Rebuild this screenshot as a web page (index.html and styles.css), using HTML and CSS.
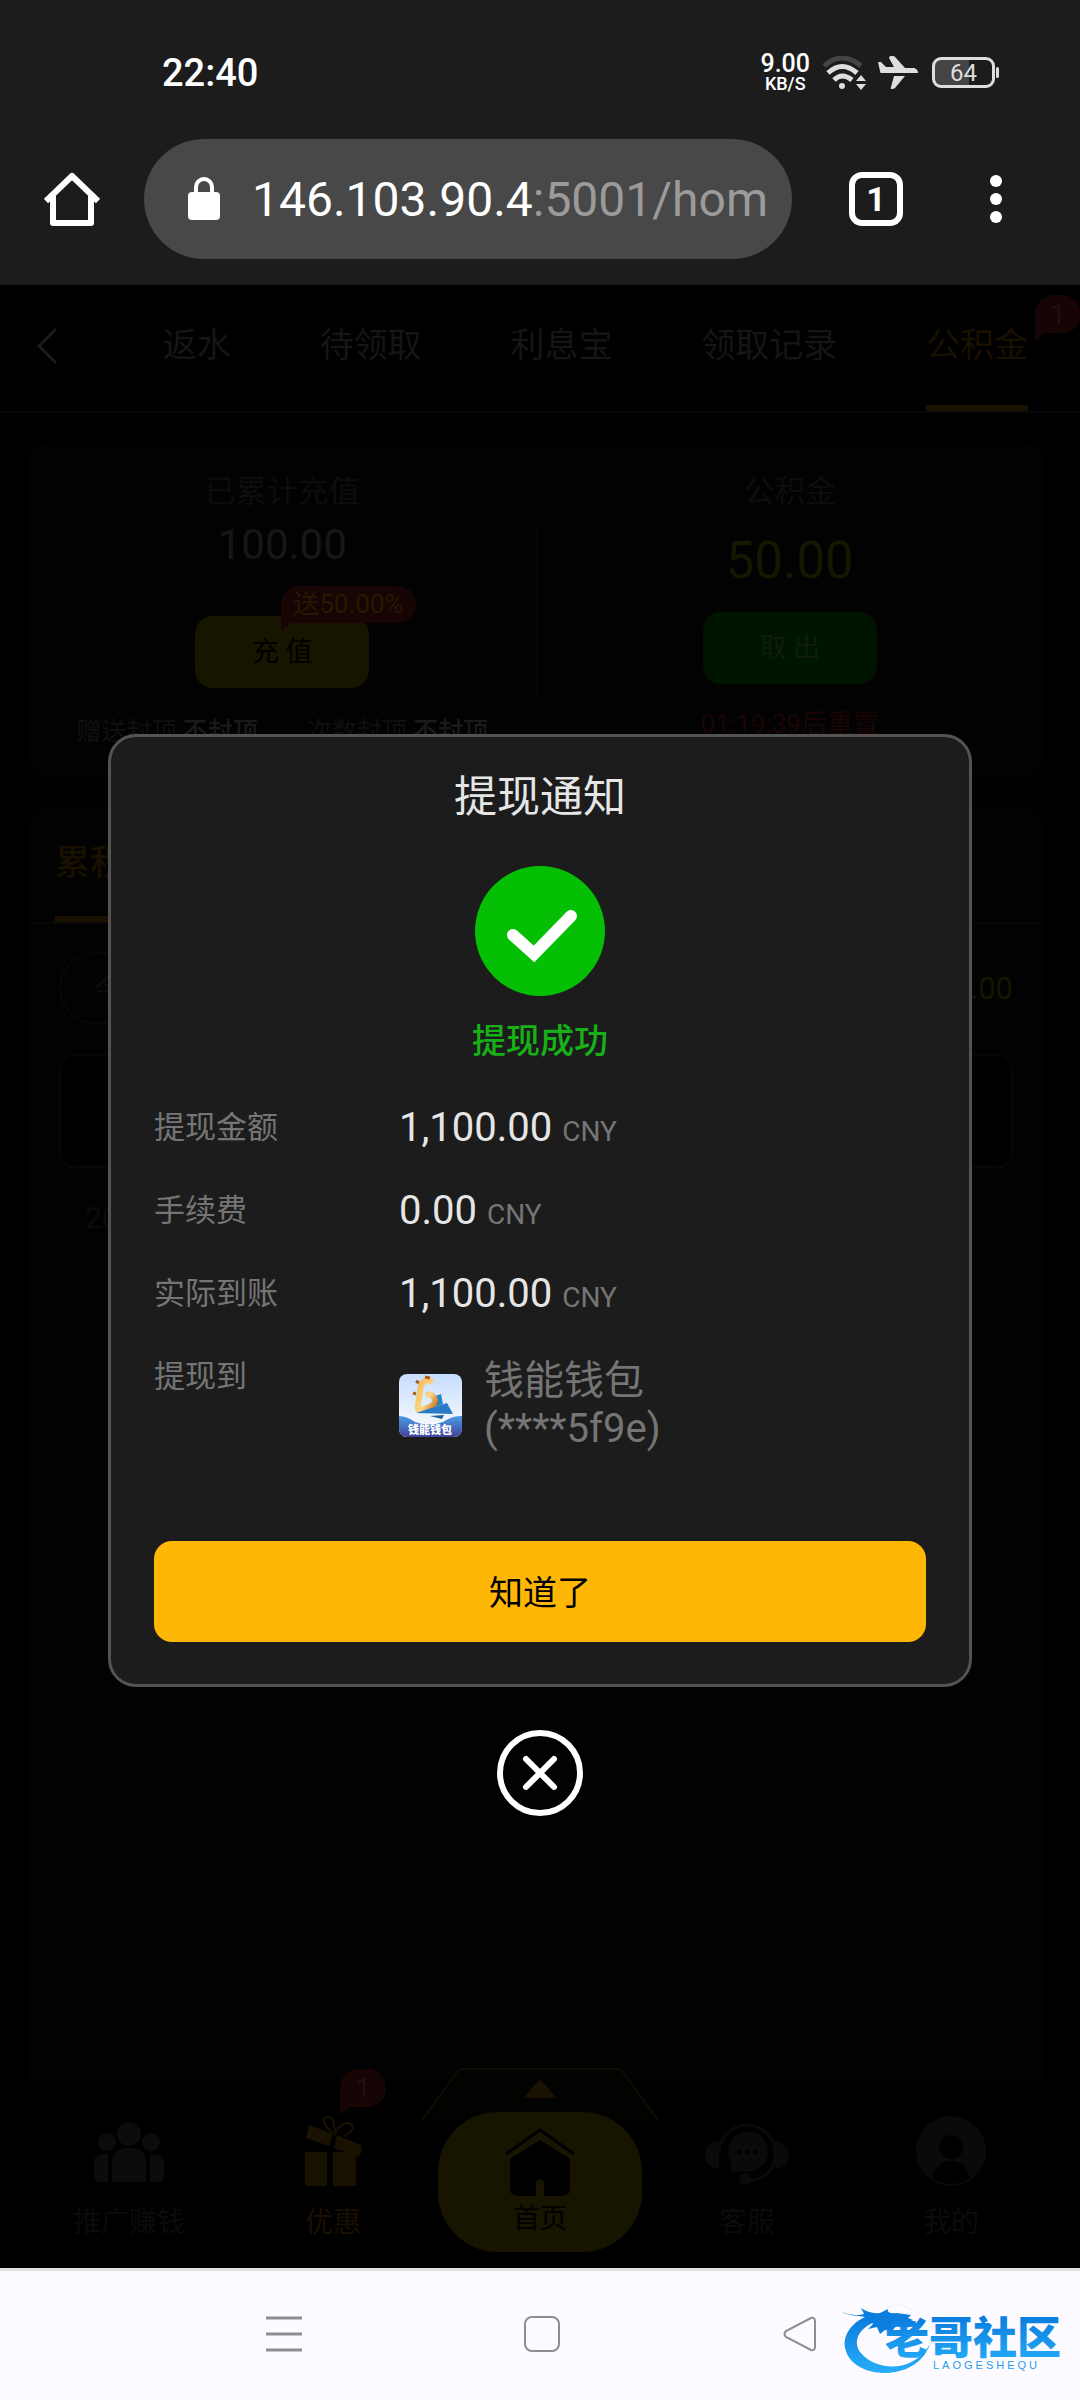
FILE: index.html
```
<!DOCTYPE html>
<html lang="zh-CN">
<head>
    <meta charset="UTF-8">
    <meta name="viewport" content="width=device-width, initial-scale=1.0">
    <title>提现通知</title>
    <link rel="stylesheet" href="styles.css">
</head>
<body>
    <header class="browser">
        <div class="status-bar">
            <span class="clock">22:40</span>
            <div class="status-icons">
                <div class="speed"><span class="speed-num">9.00</span><span class="speed-unit">KB/S</span></div>
                <svg class="wifi" viewBox="0 0 44 34" fill="none" stroke="#dedede" stroke-width="5">
                    <path d="M2 10Q20-6 39 10" stroke="#444"/>
                    <path d="M6 17Q20 4 35 17"/>
                    <path d="M12 24Q20 16 30 24"/>
                    <circle cx="20" cy="30" r="3" fill="#dedede" stroke="none"/>
                    <path d="M34 25l5-6 5 6zM34 28h10l-5 6z" fill="#dedede" stroke="none"/>
                </svg>
                <svg class="plane" viewBox="0 0 40 34" fill="#dedede">
                    <path d="M11 2q0-2 2-2h2q2 0 3 2l9 10h9q4 1 4 5H3q-1 0-1-2L0 6h3l5 5h8z"/>
                    <path d="M16 20h11L17 32q-1 1-3 1-2 0-1-2z"/>
                </svg>
                <div class="battery"><span>64</span></div>
            </div>
        </div>
        <div class="address-bar">
            <button class="icon-btn home-btn" aria-label="主页">
                <svg width="56" height="56" viewBox="0 0 56 56" fill="none" stroke="#fff" stroke-width="6" stroke-linejoin="round">
                    <path d="M2 30L28 5l26 25"/><path d="M9 25v27h38V25"/>
                </svg>
            </button>
            <button class="url">
                <svg width="32" height="44" viewBox="0 0 32 44"><rect y="15" width="32" height="28" rx="4" fill="#fff"/><path d="M8 17V10a8 8 0 0 1 16 0v7" fill="none" stroke="#fff" stroke-width="4"/></svg>
                <span class="url-text">146.103.90.4<span class="url-path">:5001/hom</span></span>
            </button>
            <button class="icon-btn tabs-btn">1</button>
            <button class="icon-btn more-btn" aria-label="更多">
                <svg width="12" height="48" viewBox="0 0 12 48" fill="#fff"><circle cx="6" cy="6" r="6"/><circle cx="6" cy="24" r="6"/><circle cx="6" cy="42" r="6"/></svg>
            </button>
        </div>
    </header>

    <main class="page">
        <nav class="tabs">
            <button class="back" aria-label="返回">
                <svg width="22" height="36" viewBox="0 0 22 36" fill="none" stroke="#1b1b1b" stroke-width="3"><path d="M20 1L3 18l17 17"/></svg>
            </button>
            <a href="#">返水</a>
            <a href="#">待领取</a>
            <a href="#">利息宝</a>
            <a href="#">领取记录</a>
            <a href="#" class="active">公积金<span class="badge">1</span></a>
        </nav>

        <section class="card summary">
            <div class="summary-col">
                <div class="summary-label">已累计充值</div>
                <div class="summary-num">100.00</div>
                <button class="btn btn-yellow">充 值<span class="tip">送50.00%</span></button>
                <div class="limits">
                    <span>赠送封顶 <b>不封顶</b></span>
                    <span>次数封顶 <b>不封顶</b></span>
                </div>
            </div>
            <div class="divider"></div>
            <div class="summary-col">
                <div class="summary-label">公积金</div>
                <div class="summary-num big">50.00</div>
                <button class="btn btn-green">取 出</button>
                <div class="reset">01:19:39后重置</div>
            </div>
        </section>

        <section class="card records">
            <div class="record-tabs"><span>累积</span></div>
            <div class="filter">
                <button class="day">今日</button>
                <span class="total">0.00</span>
            </div>
            <div class="record-box"></div>
            <div class="record-date">20</div>
        </section>

        <nav class="bottom-nav">
            <svg class="arch" viewBox="0 0 236 54" fill="none">
                <path d="M0 52L36 3q2-2 5-2h154q3 0 5 2l36 49" fill="#020201" stroke="#0e0d03" stroke-width="2"/>
                <path d="M118 12q2 0 16 18h-32q14-18 16-18z" fill="#1a1100"/>
            </svg>
            <a href="#">
                <svg width="70" height="70" viewBox="0 0 70 70" fill="#0c0c0c">
                    <circle cx="35" cy="18" r="12"/><circle cx="13" cy="26" r="9"/><circle cx="57" cy="26" r="9"/>
                    <path d="M18 66V46q0-14 17-14t17 14v20zM0 61V46q0-8 14-8v28H5q-5 0-5-5zM56 38q14 0 14 8v15q0 5-5 5h-9z"/>
                </svg>
                推广赚钱
            </a>
            <a href="#" class="promo">
                <svg width="60" height="70" viewBox="0 0 60 70" fill="#1a1200">
                    <path d="M2 36h22v34H5q-3 0-3-3zM30 36h23v31q0 3-3 3H30z"/>
                    <path d="M6 9l24 9-4 12L3 22zM34 19l24 10q2 8-3 12l-24-9z"/>
                    <path d="M30 17q-14-12-7-16 8-3 9 16 8-13 16-9 6 5-7 12" fill="none" stroke="#1a1200" stroke-width="2"/>
                </svg>
                优惠
                <span class="badge">1</span>
            </a>
            <a href="#" class="home">
                <svg width="72" height="70" viewBox="0 0 72 70">
                    <path d="M2 26L36 2l34 24" fill="none" stroke="#000" stroke-width="3"/>
                    <path d="M36 12l30 19v29q0 8-8 8H40V55q0-4-4-4t-4 4v13H14q-8 0-8-8V31z"/>
                </svg>
                首页
            </a>
            <a href="#">
                <svg width="84" height="70" viewBox="0 0 84 70" fill="#0a0a0a">
                    <path d="M14 25v27H9Q0 48 0 38t14-13zM70 25v27h5q9-4 9-14t-14-13z"/>
                    <path d="M14 38a28 29 0 1 1 50 18q-8 8-22 9" fill="none" stroke="#0a0a0a" stroke-width="3"/>
                    <path d="M26 57V46a20 20 0 1 1 13 9q-5 0-13 2z"/><circle cx="40" cy="63" r="6"/>
                    <path d="M32 34h4v4h-4zM40 34h4v4h-4zM48 34h4v4h-4z" fill="#000"/>
                </svg>
                客服
            </a>
            <a href="#">
                <svg width="70" height="70" viewBox="0 0 70 70">
                    <circle cx="35" cy="35" r="35" fill="#0a0a0a"/><circle cx="35" cy="31" r="12"/><path d="M16 62q5-17 19-17t19 17q-19 12-38 0z"/>
                </svg>
                我的
            </a>
        </nav>

        <!-- withdraw notice -->
        <div class="overlay">
            <div class="modal" role="dialog" aria-labelledby="modal-title">
                <h2 id="modal-title">提现通知</h2>
                <svg class="check" width="130" height="130" viewBox="0 0 130 130">
                    <circle cx="65" cy="65" r="65" fill="#05bf05"/>
                    <path d="M38 69l21 19 37-38" fill="none" stroke="#fff" stroke-width="12" stroke-linecap="round"/>
                </svg>
                <div class="success">提现成功</div>
                <dl class="details">
                    <dt>提现金额</dt><dd>1,100.00 <small>CNY</small></dd>
                    <dt>手续费</dt><dd>0.00 <small>CNY</small></dd>
                    <dt>实际到账</dt><dd>1,100.00 <small>CNY</small></dd>
                    <dt>提现到</dt>
                    <dd class="wallet">
                        <svg width="63" height="63" viewBox="0 0 63 63">
                            <defs>
                                <linearGradient id="sky" x2="0" y2="1"><stop stop-color="#c6ddfd"/><stop offset="1" stop-color="#fff"/></linearGradient>
                                <linearGradient id="sea" x2="0" y2="1"><stop stop-color="#4a9de6"/><stop offset="1" stop-color="#44429c"/></linearGradient>
                                <linearGradient id="gold" x2="1" y2="1"><stop stop-color="#f6bb57"/><stop offset=".6" stop-color="#fbd68b"/><stop offset="1" stop-color="#c8701c"/></linearGradient>
                                <clipPath id="round"><rect width="63" height="63" rx="8"/></clipPath>
                            </defs>
                            <g clip-path="url(#round)">
                                <rect width="63" height="63" fill="url(#sky)"/>
                                <path d="M0 42q8 0 16 6 14 5 28 0 10-7 19-6v21H0z" fill="url(#sea)"/>
                                <path d="M36 22l6-2 2 10-10 4z" fill="#2586bf"/>
                                <path d="M33 9q-3-4-7-2-5 3-5 12-2 10-2 16 3 2 8-1 9-2 9-8-2-7-9-5" fill="none" stroke="url(#gold)" stroke-width="6"/>
                                <path d="M26 3l5 1M20 9l-3-2M17 20l-3-1" stroke="#ad5d14" stroke-width="3"/>
                                <path d="M17 39l31-10 6 11z" fill="#287bc4"/><path d="M31 42l14-1-2 4z" fill="#1c609d"/>
                                <text x="31" y="60" text-anchor="middle" class="wallet-name">钱能钱包</text>
                            </g>
                        </svg>
                        <span>钱能钱包<br>(****5f9e)</span>
                    </dd>
                </dl>
                <button class="confirm">知道了</button>
            </div>
            <button class="close" aria-label="关闭">
                <svg width="86" height="86" viewBox="0 0 86 86" fill="none" stroke="#fff" stroke-width="6"><circle cx="43" cy="43" r="40"/><path d="M29 29l28 28M57 29L29 57" stroke-linecap="round"/></svg>
            </button>
        </div>
    </main>

    <footer class="system-nav">
        <button aria-label="最近任务"><svg width="36" height="36" viewBox="0 0 36 36" stroke="#8f8d91" stroke-width="3"><path d="M0 2h36M0 18h36M0 34h36"/></svg></button>
        <button aria-label="桌面"><svg width="36" height="36" viewBox="0 0 36 36" fill="none" stroke="#8f8d91" stroke-width="2"><rect x="1" y="1" width="34" height="34" rx="7"/></svg></button>
        <button aria-label="返回"><svg width="36" height="36" viewBox="0 0 36 36" fill="none" stroke="#8f8d91" stroke-width="2"><path d="M29 2L4 15q-3 3 0 6l25 13q4 1 4-3V5q0-4-4-3z"/></svg></button>
        <svg class="watermark" viewBox="0 0 224 74">
            <defs><linearGradient id="blue" x2="0" y2="1"><stop stop-color="#0879dc"/><stop offset="1" stop-color="#27aef8"/></linearGradient></defs>
            <path d="M32 8C8 14-1 32 4 45c8 28 70 33 84-7C72 67 34 66 18 46 10 34 18 20 38 14z" fill="url(#blue)"/>
            <path d="M0 6q12 5 22 2l-3-6q8 6 19 5l8-4q-2 5 9 4l14 2-3 3 5 2-5 3 2 4-8 1-5-3-5 6-7-1-5 4-3-7-9 2 5-5q-5-8-15-8Q6 9 0 6z" fill="#0b7fdf"/>
            <path d="M44 3q12-9 25 1" fill="none" stroke="#eef0f6"/>
            <text x="43" y="48" class="mark-main" fill="url(#blue)">老哥社区</text>
            <text x="91" y="63" class="mark-sub">LAOGESHEQU</text>
        </svg>
    </footer>
</body>
</html>
```
FILE: styles.css
```
* {
    box-sizing: border-box;
}
body {
    margin: 0;
    min-height: 100vh;
    display: flex;
    flex-direction: column;
    background: #000;
    font-family: Roboto, "Noto Sans CJK SC", sans-serif;
}
button {
    margin: 0;
    padding: 0;
    border: 0;
    background: none;
    color: inherit;
    font: inherit;
}
svg {
    display: block;
    flex: none;
}
a {
    color: inherit;
    text-decoration: none;
}

/* browser chrome */
.browser {
    height: 285px;
    background: #1c1c1c;
    color: #fff;
}
.status-bar {
    display: flex;
    justify-content: space-between;
    align-items: center;
    padding: 48px 81px 0 162px;
    height: 97px;
}
.clock {
    font-size: 38px;
    font-weight: 500;
}
.status-icons {
    display: flex;
    align-items: center;
    gap: 12px;
}
.speed {
    display: flex;
    flex-direction: column;
    align-items: center;
    font-weight: 500;
}
.speed-num {
    font-size: 25px;
    line-height: 22px;
}
.speed-unit {
    font-size: 18px;
    line-height: 18px;
}
.wifi {
    width: 44px;
    height: 34px;
}
.plane {
    width: 40px;
    height: 34px;
}
.battery {
    position: relative;
    width: 63px;
    height: 31px;
    margin: 0 4px 0 2px;
    border: 3px solid #dedede;
    border-radius: 9px;
    background: linear-gradient(90deg, #444 60%, transparent 60%);
    color: #dedede;
    font-size: 24px;
    line-height: 26px;
    text-align: center;
}
.battery::after {
    content: "";
    position: absolute;
    right: -7px;
    top: 7px;
    width: 3px;
    height: 11px;
    border-radius: 2px;
    background: #dedede;
}
.address-bar {
    display: flex;
    align-items: center;
    padding: 42px 78px 0 44px;
}
.url {
    flex: 1;
    min-width: 0;
    height: 120px;
    margin: 0 57px 0 44px;
    padding: 0 16px 0 44px;
    display: flex;
    align-items: center;
    gap: 32px;
    border-radius: 60px;
    background: #484848;
}
.url-text {
    font-size: 48px;
    white-space: nowrap;
    overflow: hidden;
}
.url-path {
    color: #9b9b9b;
}
.tabs-btn {
    width: 54px;
    height: 54px;
    margin-right: 87px;
    border: 6px solid #fff;
    border-radius: 13px;
    font-size: 34px;
    font-weight: 700;
    line-height: 42px;
}

/* page below the mask */
.page {
    position: relative;
    flex: 1;
    display: flex;
    flex-direction: column;
}
.tabs {
    display: flex;
    justify-content: space-between;
    height: 128px;
    padding: 0 52px 0 36px;
    border-bottom: 2px solid #080808;
    color: #151515;
    font-size: 34px;
    line-height: 120px;
}
.back {
    padding: 0 16px 4px 0;
}
.tabs a {
    position: relative;
    border-bottom: 6px solid transparent;
}
.tabs .active {
    color: #1a1000;
    border-color: #1a1100;
}
.badge {
    position: absolute;
    left: 109px;
    top: 10px;
    width: 46px;
    height: 38px;
    border-radius: 19px 19px 19px 0;
    background: #170404;
    color: #241010;
    font-size: 26px;
    line-height: 38px;
    text-align: center;
}
.badge::after,
.tip::after {
    content: "";
    position: absolute;
    left: 0;
    top: 100%;
    border-top: 8px solid #170404;
    border-right: 10px solid transparent;
}
.card {
    margin: 0 37px 0 29px;
    border-radius: 20px;
    background: #020202;
}
.summary {
    display: flex;
    height: 336px;
    margin-top: 29px;
}
.summary-col {
    flex: 1;
    display: flex;
    flex-direction: column;
    align-items: center;
    padding-top: 30px;
}
.summary-label {
    color: #0d0d0d;
    font-size: 31px;
    line-height: 40px;
}
.summary-num {
    height: 104px;
    color: #171717;
    font-size: 42px;
    line-height: 66px;
}
.summary-num.big {
    height: 100px;
    color: #171600;
    font-size: 51px;
    line-height: 98px;
}
.btn {
    position: relative;
    width: 174px;
    height: 72px;
    padding-bottom: 5px;
    border-radius: 18px;
    font-size: 27px;
}
.btn-yellow {
    background: #171400;
    color: #000;
}
.btn-green {
    background: #001500;
    color: #101c10;
}
.tip {
    position: absolute;
    left: 86px;
    top: -30px;
    padding: 0 12px;
    border-radius: 18px 18px 18px 0;
    background: #170404;
    color: #271900;
    font-size: 26px;
    line-height: 37px;
    white-space: nowrap;
}
.divider {
    width: 1px;
    margin: 84px 0;
    background: #080808;
}
.limits {
    display: flex;
    gap: 49px;
    padding-top: 24px;
    color: #101010;
    font-size: 25px;
    line-height: 40px;
    white-space: nowrap;
}
.limits b {
    color: #1a1a1a;
    font-weight: 500;
}
.reset {
    padding-top: 20px;
    color: #1a0505;
    font-size: 26px;
    line-height: 40px;
}
.records {
    flex: 1;
    margin-top: 30px;
    border-radius: 20px 20px 0 0;
}
.record-tabs {
    display: flex;
    height: 116px;
    padding-left: 26px;
    border-bottom: 2px solid #070707;
    color: #1a1000;
    font-size: 35px;
    font-weight: 500;
    line-height: 112px;
}
.record-tabs span {
    border-bottom: 6px solid #1a1100;
}
.filter {
    display: flex;
    justify-content: space-between;
    align-items: center;
    padding: 28px 30px;
}
.day {
    width: 180px;
    height: 72px;
    padding-left: 32px;
    border: 2px solid #080808;
    border-radius: 36px;
    color: #0c0c0c;
    font-size: 28px;
    text-align: left;
}
.total {
    color: #151500;
    font-size: 31px;
}
.record-box {
    height: 114px;
    margin: 2px 30px;
    border: 2px solid #070707;
    border-radius: 16px;
    background: #000;
}
.record-date {
    padding: 30px 56px;
    color: #0b0b0b;
    font-size: 30px;
}

.bottom-nav {
    position: relative;
    display: flex;
    height: 189px;
    padding: 0 27px;
    background: #000;
    color: #0b0b0b;
    font-size: 28px;
    line-height: 40px;
}
.bottom-nav a {
    position: relative;
    flex: 1;
    display: flex;
    flex-direction: column;
    align-items: center;
    gap: 17px;
    padding-top: 37px;
}
.bottom-nav .promo {
    color: #1a1000;
}
.promo .badge {
    left: 109px;
    top: -10px;
}
.bottom-nav .home {
    height: 140px;
    margin: 33px 3px 0;
    padding-top: 16px;
    gap: 1px;
    border-radius: 60px;
    background: #171400;
    color: #000;
    font-size: 27px;
}
.arch {
    position: absolute;
    left: calc(50% - 118px);
    top: -11px;
    width: 236px;
    height: 54px;
}

/* modal */
.overlay {
    position: absolute;
    inset: 0;
    display: flex;
    flex-direction: column;
    align-items: center;
    padding: 449px 10% 0;
}
.modal {
    width: 100%;
    padding: 30px 43px 42px;
    display: flex;
    flex-direction: column;
    align-items: center;
    border: 3px solid #535353;
    border-radius: 28px;
    background: #1c1c1c;
}
.modal h2 {
    margin: 0;
    color: #e6e6e6;
    font-size: 43px;
    font-weight: 400;
    line-height: 60px;
}
.check {
    margin: 39px 0 20px;
}
.success {
    color: #17b117;
    font-size: 34px;
    font-weight: 500;
    line-height: 50px;
}
.details {
    width: 100%;
    margin: 38px 0 88px;
    display: grid;
    grid-template-columns: 245px 1fr;
    row-gap: 35px;
    color: #757575;
    font-size: 31px;
    line-height: 48px;
}
.details dt,
.details dd {
    margin: 0;
}
.details dd {
    color: #e6e6e6;
    font-size: 40px;
}
.details small {
    color: #757575;
    font-size: 28px;
    line-height: 28px;
}
.details .wallet {
    display: flex;
    align-items: center;
    gap: 22px;
    padding-top: 4px;
    color: #757575;
}
.wallet-name {
    fill: #fff;
    font-size: 11px;
    font-weight: 900;
}
.confirm {
    width: 100%;
    height: 101px;
    padding-bottom: 3px;
    border-radius: 18px;
    background: #ffb706;
    color: #000;
    font-size: 34px;
}
.close {
    margin-top: 43px;
}

/* android buttons */
.system-nav {
    position: relative;
    display: flex;
    align-items: center;
    gap: 222px;
    height: 132px;
    padding: 0 0 3px 266px;
    border-top: 3px solid #e2e2e6;
    background: #fdfbff;
}
.watermark {
    position: absolute;
    right: 14px;
    bottom: 20px;
    width: 224px;
    height: 74px;
    overflow: visible;
}
.mark-main {
    font-size: 44px;
    font-weight: 900;
}
.mark-sub {
    fill: #2a9cea;
    font-family: "Liberation Sans", sans-serif;
    font-size: 11px;
    letter-spacing: 3px;
}
```
